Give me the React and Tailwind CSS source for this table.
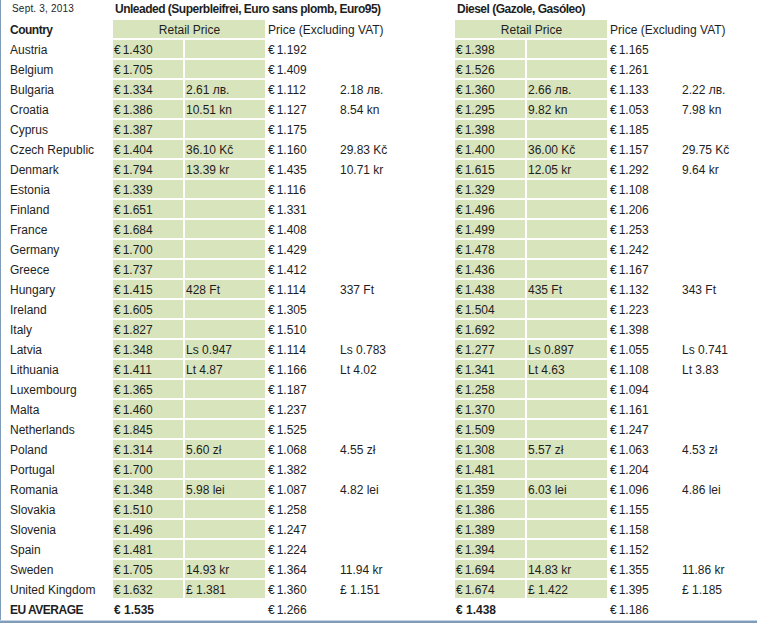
import React from "react";

const rows = [
  ["Austria", "€1.430", "", "€1.192", "", "€1.398", "", "€1.165", ""],
  ["Belgium", "€1.705", "", "€1.409", "", "€1.526", "", "€1.261", ""],
  ["Bulgaria", "€1.334", "2.61 лв.", "€1.112", "2.18 лв.", "€1.360", "2.66 лв.", "€1.133", "2.22 лв."],
  ["Croatia", "€1.386", "10.51 kn", "€1.127", "8.54 kn", "€1.295", "9.82 kn", "€1.053", "7.98 kn"],
  ["Cyprus", "€1.387", "", "€1.175", "", "€1.398", "", "€1.185", ""],
  ["Czech Republic", "€1.404", "36.10 Kč", "€1.160", "29.83 Kč", "€1.400", "36.00 Kč", "€1.157", "29.75 Kč"],
  ["Denmark", "€1.794", "13.39 kr", "€1.435", "10.71 kr", "€1.615", "12.05 kr", "€1.292", "9.64 kr"],
  ["Estonia", "€1.339", "", "€1.116", "", "€1.329", "", "€1.108", ""],
  ["Finland", "€1.651", "", "€1.331", "", "€1.496", "", "€1.206", ""],
  ["France", "€1.684", "", "€1.408", "", "€1.499", "", "€1.253", ""],
  ["Germany", "€1.700", "", "€1.429", "", "€1.478", "", "€1.242", ""],
  ["Greece", "€1.737", "", "€1.412", "", "€1.436", "", "€1.167", ""],
  ["Hungary", "€1.415", "428 Ft", "€1.114", "337 Ft", "€1.438", "435 Ft", "€1.132", "343 Ft"],
  ["Ireland", "€1.605", "", "€1.305", "", "€1.504", "", "€1.223", ""],
  ["Italy", "€1.827", "", "€1.510", "", "€1.692", "", "€1.398", ""],
  ["Latvia", "€1.348", "Ls 0.947", "€1.114", "Ls 0.783", "€1.277", "Ls 0.897", "€1.055", "Ls 0.741"],
  ["Lithuania", "€1.411", "Lt 4.87", "€1.166", "Lt 4.02", "€1.341", "Lt 4.63", "€1.108", "Lt 3.83"],
  ["Luxembourg", "€1.365", "", "€1.187", "", "€1.258", "", "€1.094", ""],
  ["Malta", "€1.460", "", "€1.237", "", "€1.370", "", "€1.161", ""],
  ["Netherlands", "€1.845", "", "€1.525", "", "€1.509", "", "€1.247", ""],
  ["Poland", "€1.314", "5.60 zł", "€1.068", "4.55 zł", "€1.308", "5.57 zł", "€1.063", "4.53 zł"],
  ["Portugal", "€1.700", "", "€1.382", "", "€1.481", "", "€1.204", ""],
  ["Romania", "€1.348", "5.98 lei", "€1.087", "4.82 lei", "€1.359", "6.03 lei", "€1.096", "4.86 lei"],
  ["Slovakia", "€1.510", "", "€1.258", "", "€1.386", "", "€1.155", ""],
  ["Slovenia", "€1.496", "", "€1.247", "", "€1.389", "", "€1.158", ""],
  ["Spain", "€1.481", "", "€1.224", "", "€1.394", "", "€1.152", ""],
  ["Sweden", "€1.705", "14.93 kr", "€1.364", "11.94 kr", "€1.694", "14.83 kr", "€1.355", "11.86 kr"],
  ["United Kingdom", "€1.632", "£ 1.381", "€1.360", "£ 1.151", "€1.674", "£ 1.422", "€1.395", "£ 1.185"],
];

const green = new Set([1, 2, 5, 6]);

function Cell({ children, className = "", top = true }) {
  return (
    <div
      className={`flex items-center pl-[1px] whitespace-nowrap overflow-hidden ${top ? "pt-[2px]" : ""} ${className}`}
    >
      {children}
    </div>
  );
}

function Val({ v }) {
  if (v.startsWith("€")) {
    return (
      <>
        <span>€</span>
        <span className="ml-[2px]">{v.slice(1)}</span>
      </>
    );
  }
  return v;
}

export default function App() {
  return (
    <div
      className="w-full h-[624px] bg-white text-[#1e1e1e] text-[12px] leading-none overflow-hidden"
      style={{ fontFamily: '"Liberation Sans", Arial, sans-serif' }}
    >
      <div className="border-l border-[#7f9db9] pl-[8px] pb-[2px]">
        <div className="grid grid-cols-[102px_70px_80px_70px_114px_70px_80px_70px_1fr] gap-[2px] auto-rows-[18px]">
          {/* title row */}
          <Cell top={false} className="pl-[3px] text-[10px] tracking-[0.2px]">
            Sept. 3, 2013
          </Cell>
          <Cell top={false} className="col-span-4 pl-[2px] font-bold tracking-[-0.5px]">
            Unleaded (Superbleifrei, Euro sans plomb, Euro95)
          </Cell>
          <Cell top={false} className="col-span-4 pl-[2px] font-bold tracking-[-0.5px]">
            Diesel (Gazole, Gasóleo)
          </Cell>

          {/* header row */}
          <Cell className="font-bold tracking-[-0.5px]">Country</Cell>
          <Cell className="col-span-2 justify-center bg-[#d8e4bc]">Retail Price</Cell>
          <Cell className="col-span-2">Price (Excluding VAT)</Cell>
          <Cell className="col-span-2 justify-center bg-[#d8e4bc]">Retail Price</Cell>
          <Cell className="col-span-2">Price (Excluding VAT)</Cell>

          {rows.map((r) =>
            r.map((v, i) => (
              <Cell key={r[0] + i} className={green.has(i) ? "bg-[#d8e4bc]" : ""}>
                <Val v={v} />
              </Cell>
            ))
          )}

          {/* EU average */}
          <Cell className="font-bold tracking-[-0.5px]">EU AVERAGE</Cell>
          <Cell className="font-bold">€ 1.535</Cell>
          <Cell />
          <Cell>
            <Val v="€1.266" />
          </Cell>
          <Cell />
          <Cell className="font-bold">€ 1.438</Cell>
          <Cell />
          <Cell>
            <Val v="€1.186" />
          </Cell>
          <Cell />
        </div>
      </div>
      <div className="h-[1px] bg-[#c6d4e2]" />
      <div className="h-[2px] bg-[#7f9db9]" />
    </div>
  );
}
